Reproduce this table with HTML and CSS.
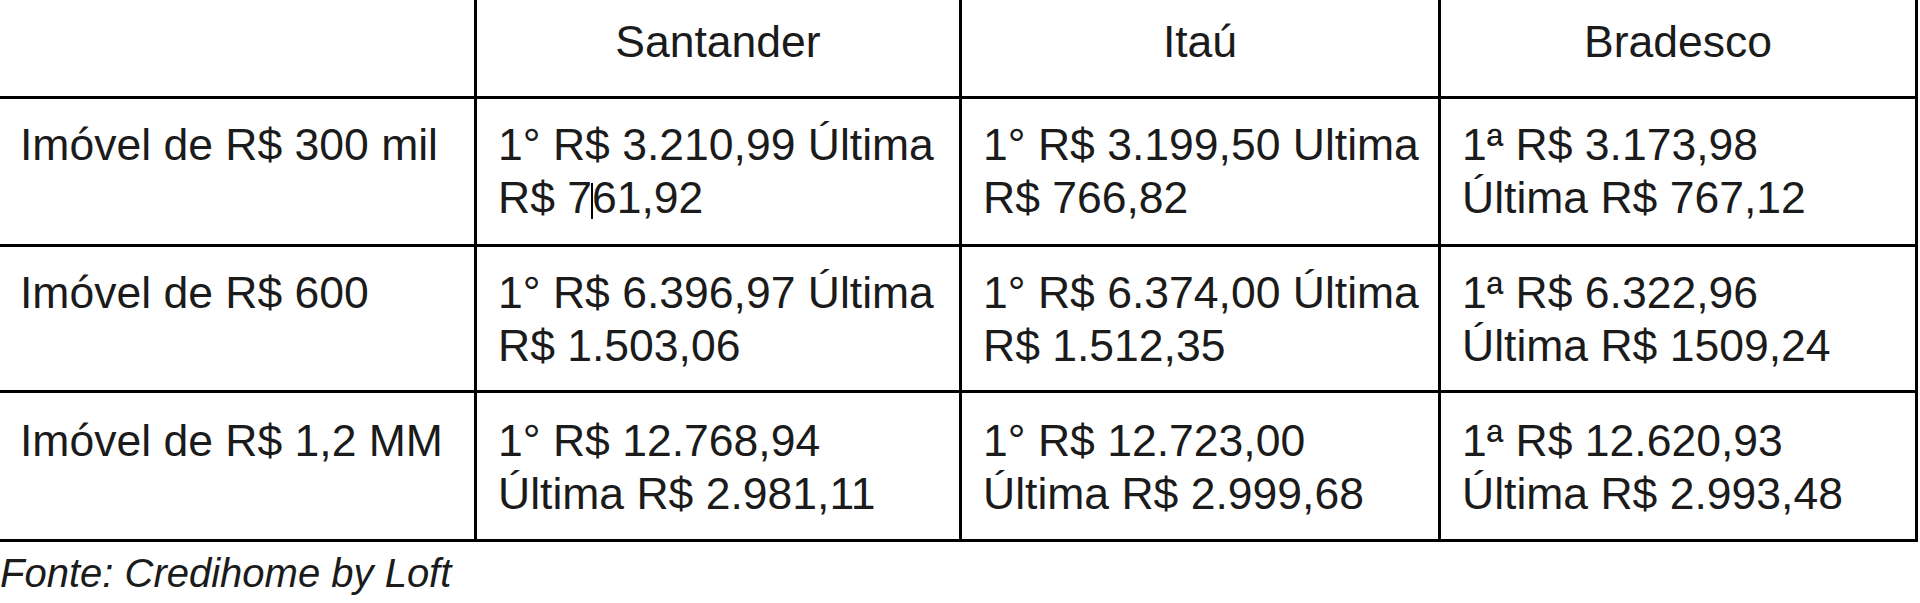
FILE: index.html
```html
<!DOCTYPE html>
<html lang="pt-BR">
<head>
<meta charset="utf-8">
<title>Comparativo de financiamento</title>
<link rel="stylesheet" href="styles.css">
</head>
<body>
<div class="table">
  <div class="cell head"></div>
  <div class="cell head">Santander</div>
  <div class="cell head">Itaú</div>
  <div class="cell head">Bradesco</div>

  <div class="cell">Imóvel de R$ 300 mil</div>
  <div class="cell">1° R$ 3.210,99 Última<br>R$ 7<span class="caret"></span>61,92</div>
  <div class="cell">1° R$ 3.199,50 Ultima<br>R$ 766,82</div>
  <div class="cell">1ª R$ 3.173,98<br>Última R$ 767,12</div>

  <div class="cell">Imóvel de R$ 600</div>
  <div class="cell">1° R$ 6.396,97 Última<br>R$ 1.503,06</div>
  <div class="cell">1° R$ 6.374,00 Última<br>R$ 1.512,35</div>
  <div class="cell">1ª R$ 6.322,96<br>Última R$ 1509,24</div>

  <div class="cell last">Imóvel de R$ 1,2 MM</div>
  <div class="cell last">1° R$ 12.768,94<br>Última R$ 2.981,11</div>
  <div class="cell last">1° R$ 12.723,00<br>Última R$ 2.999,68</div>
  <div class="cell last">1ª R$ 12.620,93<br>Última R$ 2.993,48</div>
</div>
<p class="source">Fonte: Credihome by Loft</p>
</body>
</html>
```

FILE: styles.css
```css
html, body {
  margin: 0;
  padding: 0;
  background: #ffffff;
}

body {
  font-family: "Liberation Sans", Arial, sans-serif;
  color: #1b1b1b;
  overflow: hidden;
}

.table {
  display: grid;
  grid-template-columns: 475px 482px 476px 474px;
  grid-template-rows: 96px 145px 143px 146px;
  gap: 3px;
  padding: 3px;
  background: #000000;
  width: max-content;
  margin: -3px 0 0 -4px;
}

.cell {
  background: #ffffff;
  padding: 19px 8px 0 21px;
  font-size: 44.5px;
  line-height: 53px;
  white-space: nowrap;
}

.cell.head {
  text-align: center;
  padding: 15px 0 0 0;
}

.cell.last {
  padding-top: 21px;
}

.caret {
  display: inline-block;
  width: 2px;
  height: 36px;
  background: #000000;
  vertical-align: -6px;
  margin: 0 -1px;
}

.source {
  margin: 8px 0 0 0;
  font-size: 40px;
  line-height: 46px;
  font-style: italic;
  color: #1b1b1b;
}
```
